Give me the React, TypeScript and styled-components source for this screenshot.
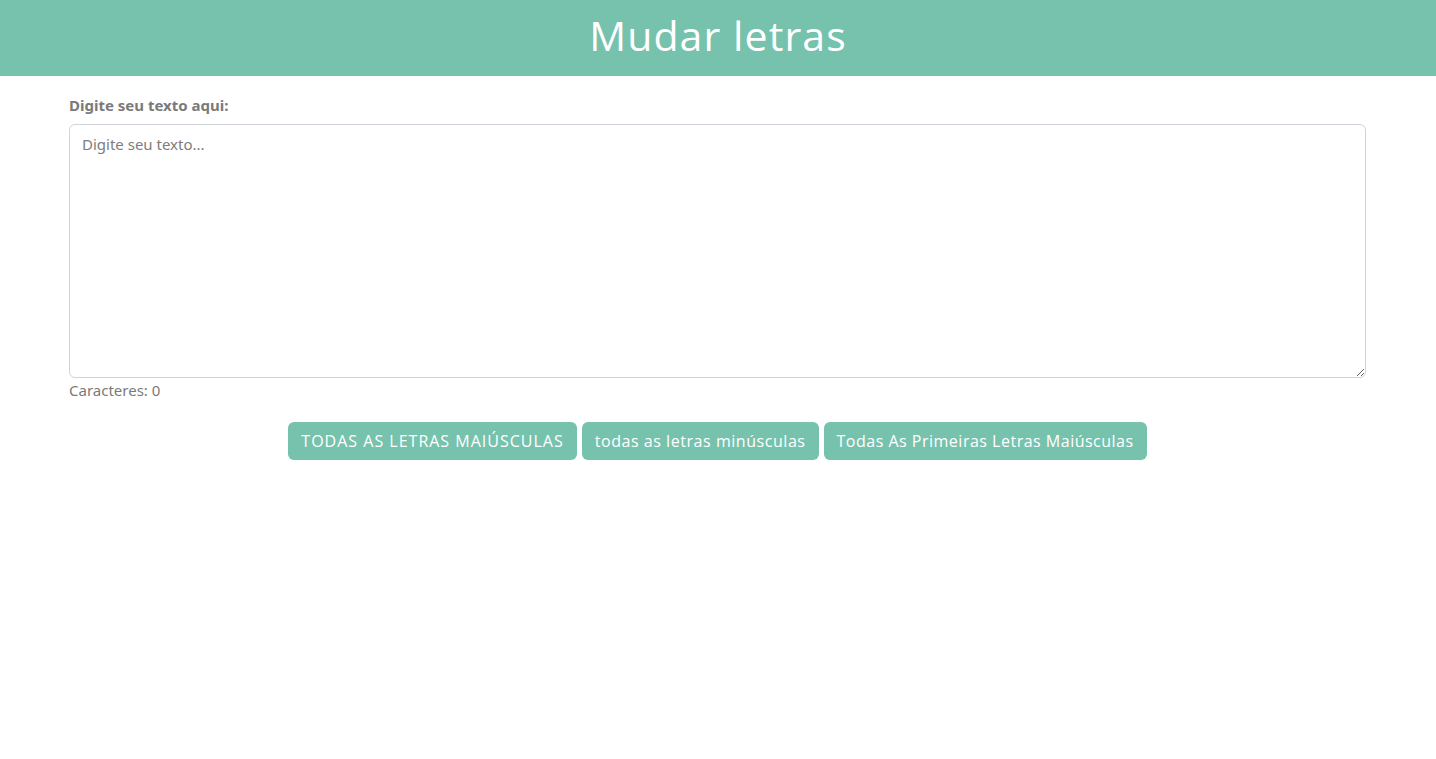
import React, { useState } from "react";
import styled, { createGlobalStyle } from "styled-components";

const Global = createGlobalStyle`
  * { box-sizing: border-box; }
  body { margin: 0; background: #fff; font-family: "Noto Sans", "Open Sans", sans-serif; }
`;

const Header = styled.header`
  height: 76px;
  background: #77c2ad;
  display: flex;
  align-items: center;
  justify-content: center;
  padding-bottom: 7px;
`;

const Title = styled.h1`
  margin: 0;
  color: #fff;
  font-family: "Open Sans", sans-serif;
  font-weight: 400;
  font-size: 41px;
  letter-spacing: 1.1px;
  line-height: 48px;
`;

const Container = styled.main`
  max-width: 1320px;
  margin: 0 auto;
  padding: 19px 12px 0 11px;
`;

const Label = styled.label`
  display: block;
  font-size: 15px;
  font-weight: 700;
  color: #7a7a7a;
  line-height: 20px;
  margin-bottom: 9px;
`;

const TextArea = styled.textarea`
  display: block;
  width: 100%;
  height: 254px;
  border: 1px solid #ced4da;
  border-radius: 6px;
  padding: 8px 12px;
  font-family: "Noto Sans", sans-serif;
  font-size: 15px;
  line-height: 22px;
  color: #444;
  resize: vertical;
  outline: none;
  &::placeholder { color: #7d7d7d; }
`;

const Count = styled.div`
  font-size: 15px;
  color: #7a7a7a;
  line-height: 24px;
`;

const Buttons = styled.div`
  display: flex;
  justify-content: center;
  gap: 5px;
  margin-top: 20px;
`;

const Button = styled.button<{ $spacing: number }>`
  height: 38px;
  padding: 0 13px;
  background: #77c2ad;
  color: #fff;
  border: none;
  border-radius: 6px;
  font-family: "Open Sans", sans-serif;
  font-size: 16px;
  letter-spacing: ${(p) => p.$spacing}px;
  cursor: pointer;
`;

export default function App() {
  const [text, setText] = useState("");
  const upper = () => setText(text.toUpperCase());
  const lower = () => setText(text.toLowerCase());
  const cap = () =>
    setText(text.toLowerCase().replace(/(^|\s)(\S)/g, (_, a, b) => a + b.toUpperCase()));
  return (
    <>
      <Global />
      <Header>
        <Title>Mudar letras</Title>
      </Header>
      <Container>
        <Label htmlFor="txt">Digite seu texto aqui:</Label>
        <TextArea
          id="txt"
          placeholder="Digite seu texto..."
          value={text}
          onChange={(e) => setText(e.target.value)}
        />
        <Count>Caracteres: {text.length}</Count>
        <Buttons>
          <Button $spacing={1} onClick={upper}>TODAS AS LETRAS MAIÚSCULAS</Button>
          <Button $spacing={0.55} onClick={lower}>todas as letras minúsculas</Button>
          <Button $spacing={0.5} onClick={cap}>Todas As Primeiras Letras Maiúsculas</Button>
        </Buttons>
      </Container>
    </>
  );
}
